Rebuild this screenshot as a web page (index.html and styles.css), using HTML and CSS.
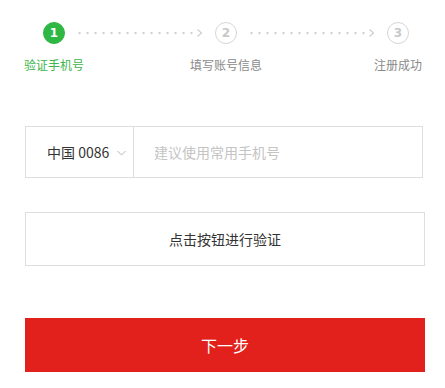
FILE: index.html
```html
<!DOCTYPE html>
<html lang="zh-CN">
<head>
<meta charset="utf-8">
<title>注册</title>
<link rel="stylesheet" href="styles.css">
</head>
<body>
<div class="page">
  <div class="steps">
    <div class="step active">
      <span class="circle">1</span>
      <span class="label">验证手机号</span>
    </div>
    <svg class="connector" width="150" height="22" viewBox="0 0 150 22">
      <g fill="#d2d2d2">
        <circle cx="14.5" cy="11" r="1.2"/><circle cx="22.5" cy="11" r="1.2"/><circle cx="30.5" cy="11" r="1.2"/><circle cx="38.5" cy="11" r="1.2"/><circle cx="46.5" cy="11" r="1.2"/><circle cx="54.5" cy="11" r="1.2"/><circle cx="62.5" cy="11" r="1.2"/><circle cx="70.5" cy="11" r="1.2"/><circle cx="78.5" cy="11" r="1.2"/><circle cx="86.5" cy="11" r="1.2"/><circle cx="94.5" cy="11" r="1.2"/><circle cx="102.5" cy="11" r="1.2"/><circle cx="110.5" cy="11" r="1.2"/><circle cx="118.5" cy="11" r="1.2"/><circle cx="126.5" cy="11" r="1.2"/>
      </g>
      <path d="M132.5 7.5 L136.5 11 L132.5 14.5" fill="none" stroke="#cfcfcf" stroke-width="1.2"/>
    </svg>
    <div class="step">
      <span class="circle">2</span>
      <span class="label">填写账号信息</span>
    </div>
    <svg class="connector" width="150" height="22" viewBox="0 0 150 22">
      <g fill="#d2d2d2">
        <circle cx="14.5" cy="11" r="1.2"/><circle cx="22.5" cy="11" r="1.2"/><circle cx="30.5" cy="11" r="1.2"/><circle cx="38.5" cy="11" r="1.2"/><circle cx="46.5" cy="11" r="1.2"/><circle cx="54.5" cy="11" r="1.2"/><circle cx="62.5" cy="11" r="1.2"/><circle cx="70.5" cy="11" r="1.2"/><circle cx="78.5" cy="11" r="1.2"/><circle cx="86.5" cy="11" r="1.2"/><circle cx="94.5" cy="11" r="1.2"/><circle cx="102.5" cy="11" r="1.2"/><circle cx="110.5" cy="11" r="1.2"/><circle cx="118.5" cy="11" r="1.2"/><circle cx="126.5" cy="11" r="1.2"/>
      </g>
      <path d="M132.5 7.5 L136.5 11 L132.5 14.5" fill="none" stroke="#cfcfcf" stroke-width="1.2"/>
    </svg>
    <div class="step">
      <span class="circle">3</span>
      <span class="label">注册成功</span>
    </div>
  </div>

  <div class="phone-field">
    <div class="country">
      <span>中国 0086</span>
      <svg class="caret" width="9" height="6" viewBox="0 0 9 6"><path d="M0.5 1 L4.5 5 L8.5 1" fill="none" stroke="#b5b5b5" stroke-width="1"/></svg>
    </div>
    <input class="phone-input" type="text" placeholder="建议使用常用手机号">
  </div>

  <button class="verify-btn" type="button">点击按钮进行验证</button>

  <button class="next-btn" type="button">下一步</button>
</div>
</body>
</html>
```

FILE: styles.css
```css
* {
  box-sizing: border-box;
}

html, body {
  margin: 0;
  padding: 0;
  background: #ffffff;
}

body {
  font-family: "Noto Sans CJK SC", "Noto Sans", "Liberation Sans", sans-serif;
  color: #333333;
}

.page {
  width: 400px;
  margin-left: 25px;
  padding-top: 22px;
}

.steps {
  display: flex;
  align-items: flex-start;
  padding-left: 18px;
  height: 52px;
}

.step {
  width: 22px;
  display: flex;
  flex-direction: column;
  align-items: center;
}

.circle {
  width: 22px;
  height: 22px;
  border-radius: 50%;
  border: 1.5px solid #d6d6d6;
  color: #c8c8c8;
  font-family: "DejaVu Sans", sans-serif;
  font-size: 12px;
  font-weight: bold;
  display: flex;
  align-items: center;
  justify-content: center;
  line-height: 1;
}

.step.active .circle {
  background: #2fb743;
  border-color: #2fb743;
  color: #ffffff;
}

.label {
  margin-top: 13px;
  font-size: 12px;
  line-height: 16px;
  white-space: nowrap;
  color: #8a8a8a;
}

.step.active .label {
  color: #3cb54c;
}

.connector {
  flex: none;
  display: block;
}

.phone-field {
  margin-top: 52px;
  width: 398px;
  height: 52px;
  border: 1px solid #dedede;
  display: flex;
}

.country {
  width: 108px;
  flex: none;
  border-right: 1px solid #dedede;
  display: flex;
  align-items: center;
  padding-left: 21px;
  font-size: 14px;
  color: #333333;
}

.caret {
  margin-left: 8px;
  margin-top: 1px;
}

.phone-input {
  flex: 1;
  border: none;
  outline: none;
  padding: 0 0 0 20px;
  font-family: inherit;
  font-size: 14px;
  color: #333333;
  background: transparent;
}

.phone-input::placeholder {
  color: #c4c4c4;
}

.verify-btn {
  display: block;
  margin-top: 34px;
  width: 400px;
  height: 54px;
  border: 1px solid #dedede;
  background: #ffffff;
  font-family: inherit;
  font-size: 14px;
  color: #333333;
  padding: 0;
}

.next-btn {
  display: block;
  margin-top: 52px;
  width: 400px;
  height: 54px;
  border: none;
  background: #e2211c;
  font-family: inherit;
  font-size: 16px;
  color: #ffffff;
  padding: 0;
}
```
